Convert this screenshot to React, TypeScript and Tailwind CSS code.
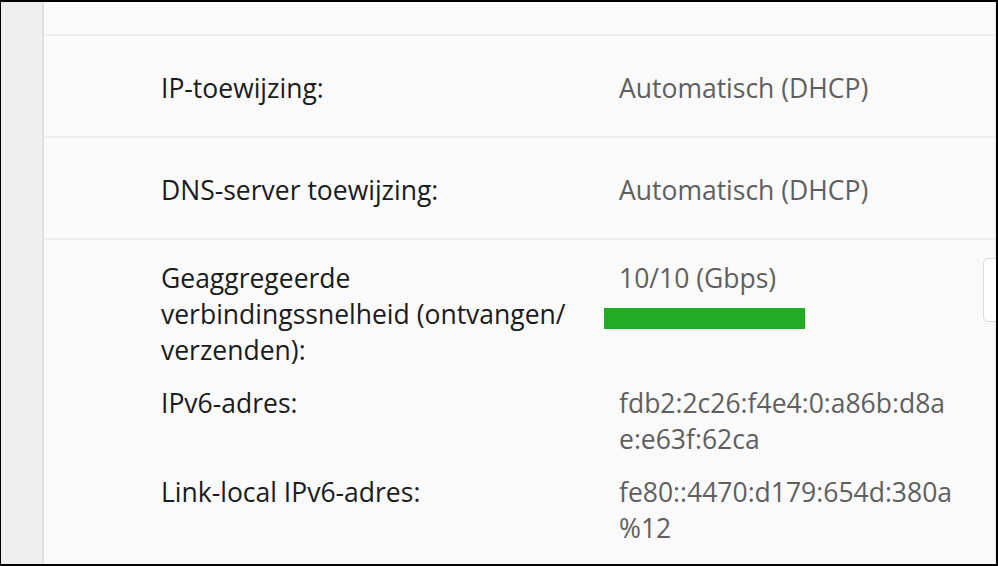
import React from "react";

function Label({ lines }: { lines: string[] }) {
  return (
    <div className="text-[#1b1b1b]">
      {lines.map((l) => (
        <div key={l}>{l}</div>
      ))}
    </div>
  );
}

function Value({ lines }: { lines: string[] }) {
  return (
    <div className="text-[#5f5f5f]">
      {lines.map((l) => (
        <div key={l}>{l}</div>
      ))}
    </div>
  );
}

export default function App() {
  return (
    <div className="relative w-[998px] h-[566px] flex overflow-hidden border-l border-t-2 border-r-2 border-b-2 border-black font-['Open_Sans',sans-serif] text-[26.5px] leading-[36px]">
      {/* nav strip */}
      <div className="w-[43px] shrink-0 bg-[#efefef] border-r-2 border-[#e2e2e2]" />

      <div className="flex-1 bg-[#fafafa] border-r border-[#ebebeb]">
        <div className="h-[34px] border-b-2 border-[#efefef]" />

        <div className="h-[102px] border-b-2 border-[#efefef] grid grid-cols-[458px_1fr] items-start pt-[34px] pl-[117px]">
          <Label lines={["IP-toewijzing:"]} />
          <Value lines={["Automatisch (DHCP)"]} />
        </div>

        <div className="h-[102px] border-b-2 border-[#efefef] grid grid-cols-[458px_1fr] items-start pt-[34px] pl-[117px]">
          <Label lines={["DNS-server toewijzing:"]} />
          <Value lines={["Automatisch (DHCP)"]} />
        </div>

        <div className="pt-[20px] pl-[117px] flex flex-col gap-[17px]">
          <div className="grid grid-cols-[458px_1fr]">
            <Label lines={["Geaggregeerde", "verbindingssnelheid (ontvangen/", "verzenden):"]} />
            <div>
              <Value lines={["10/10 (Gbps)"]} />
              <div className="mt-[12px] -ml-[15px] w-[201px] h-[21px] bg-[#22ab25]" />
            </div>
          </div>

          <div className="grid grid-cols-[458px_1fr]">
            <Label lines={["IPv6-adres:"]} />
            <Value lines={["fdb2:2c26:f4e4:0:a86b:d8a", "e:e63f:62ca"]} />
          </div>

          <div className="grid grid-cols-[458px_1fr]">
            <Label lines={["Link-local IPv6-adres:"]} />
            <Value lines={["fe80::4470:d179:654d:380a", "%12"]} />
          </div>
        </div>
      </div>

      {/* partially visible side card */}
      <div className="absolute right-[-6px] top-[256px] w-[19px] h-[64px] bg-white border border-[#dcdcdc] rounded-[5px]" />
    </div>
  );
}
